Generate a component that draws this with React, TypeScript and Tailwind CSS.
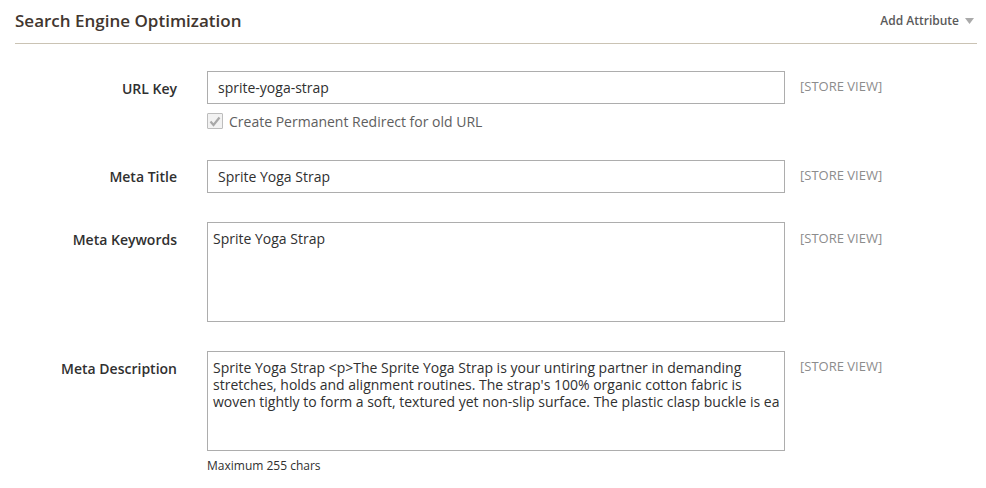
import React from "react";

const font = { fontFamily: '"Open Sans", "Noto Sans", sans-serif' };

function StoreView({ className = "" }: { className?: string }) {
  return (
    <div className={`pl-[15px] text-[13px] leading-[16px] text-[#8c8c8c] ${className}`}>[STORE VIEW]</div>
  );
}

export default function App() {
  const desc = [
    "Sprite Yoga Strap <p>The Sprite Yoga Strap is your untiring partner in demanding",
    "stretches, holds and alignment routines. The strap's 100% organic cotton fabric is",
    "woven tightly to form a soft, textured yet non-slip surface. The plastic clasp buckle is ea",
  ];
  return (
    <div className="w-[986px] h-[488px] bg-white overflow-hidden text-[#303030]" style={font}>
      <div className="mx-[15px] w-[962px]">
        <div className="flex items-center justify-between h-[44px] border-b border-[#cac3b4] pb-[1px]">
          <div className="text-[17px] font-semibold text-[#41362f] leading-[22px] -mt-[1px]">Search Engine Optimization</div>
          <div className="flex items-center gap-[6px] text-[12px] font-semibold text-[#5a5a5a] pr-[3px]">
            <span>Add Attribute</span>
            <svg width="9" height="6" viewBox="0 0 9 6"><path d="M0 0 L9 0 L4.5 6 Z" fill="#aaaaaa" /></svg>
          </div>
        </div>

        <div className="pt-[27px] flex flex-col">
          {/* URL Key */}
          <div className="flex">
            <div className="w-[162px] text-right text-[14px] font-semibold leading-[18px] pt-[9px]">URL Key</div>
            <div className="ml-[30px] w-[578px]">
              <div className="h-[33px] border border-[#adadad] flex items-center px-[10px] text-[14px]">sprite-yoga-strap</div>
              <div className="flex items-center mt-[7px] h-[20px]">
                <div className="w-[16px] h-[16px] border border-[#bdbdbd] bg-[#f2f2f2] flex items-center justify-center rounded-[1px]">
                  <svg width="12" height="11" viewBox="0 0 12 11"><path d="M1.5 5.5 L4.5 9 L10.5 1.5" stroke="#a8a8a8" strokeWidth="2.2" fill="none" /></svg>
                </div>
                <span className="ml-[6px] text-[14px] text-[#5e5e5e]">Create Permanent Redirect for old URL</span>
              </div>
            </div>
            <StoreView className="pt-[7px]" />
          </div>

          {/* Meta Title */}
          <div className="flex mt-[29px]">
            <div className="w-[162px] text-right text-[14px] font-semibold leading-[18px] pt-[8px]">Meta Title</div>
            <div className="ml-[30px] w-[578px]">
              <div className="h-[33px] border border-[#adadad] flex items-center px-[10px] text-[14px]">Sprite Yoga Strap</div>
            </div>
            <StoreView className="pt-[7px]" />
          </div>

          {/* Meta Keywords */}
          <div className="flex mt-[29px]">
            <div className="w-[162px] text-right text-[14px] font-semibold leading-[18px] pt-[9px]">Meta Keywords</div>
            <div className="ml-[30px] w-[578px]">
              <div className="h-[100px] border border-[#adadad] pl-[5px] pt-[7px] text-[14px] leading-[17px]">Sprite Yoga Strap</div>
            </div>
            <StoreView className="pt-[8px]" />
          </div>

          {/* Meta Description */}
          <div className="flex mt-[29px]">
            <div className="w-[162px] text-right text-[14px] font-semibold leading-[18px] pt-[9px]">Meta Description</div>
            <div className="ml-[30px] w-[578px]">
              <div className="h-[100px] border border-[#adadad] pl-[5px] pt-[7px] text-[14px] leading-[17px] overflow-hidden whitespace-nowrap">
                {desc.map((l, i) => (
                  <div key={i}>{l}</div>
                ))}
              </div>
              <div className="mt-[7px] text-[12px] leading-[16px]">Maximum 255 chars</div>
            </div>
            <StoreView className="pt-[7px]" />
          </div>
        </div>
      </div>
    </div>
  );
}
